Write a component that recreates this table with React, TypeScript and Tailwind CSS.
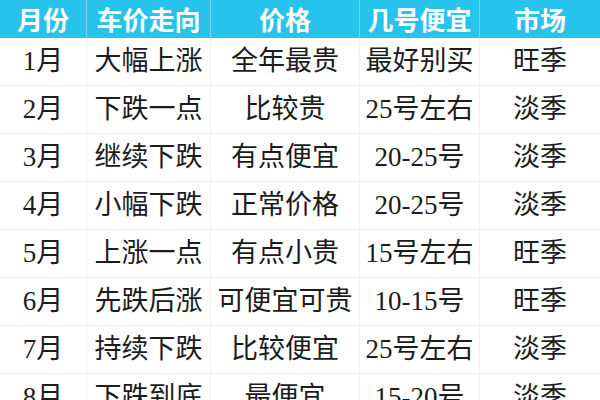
const rows: string[][] = [
  ["1月", "大幅上涨", "全年最贵", "最好别买", "旺季"],
  ["2月", "下跌一点", "比较贵", "25号左右", "淡季"],
  ["3月", "继续下跌", "有点便宜", "20-25号", "淡季"],
  ["4月", "小幅下跌", "正常价格", "20-25号", "淡季"],
  ["5月", "上涨一点", "有点小贵", "15号左右", "旺季"],
  ["6月", "先跌后涨", "可便宜可贵", "10-15号", "旺季"],
  ["7月", "持续下跌", "比较便宜", "25号左右", "淡季"],
  ["8月", "下跌到底", "最便宜", "15-20号", "淡季"],
];

const heads = ["月份", "车价走向", "价格", "几号便宜", "市场"];

const cols = "grid grid-cols-[86px_124px_149px_120px_121px]";

export default function App() {
  return (
    <div className="w-[600px] h-[400px] overflow-hidden bg-white">
      <div className={`${cols} h-[38px] bg-[#27c3ec] text-white font-bold text-[26px] font-['Noto_Sans_CJK_SC',sans-serif]`}>
        {heads.map((h, i) => (
          <div
            key={h}
            className={`flex items-center justify-center leading-none ${i > 0 ? "border-l border-[#6fd6f2]" : ""}`}
          >
            {h}
          </div>
        ))}
      </div>
      {rows.map((r) => (
        <div
          key={r[0]}
          className={`${cols} h-[48px] border-b border-[#efefef] text-[#1c1c1c] text-[27px] font-['Liberation_Serif','Noto_Sans_CJK_SC',serif]`}
        >
          {r.map((c, i) => (
            <div
              key={i}
              className={`flex items-center justify-center leading-none ${i > 0 ? "border-l border-[#f1f1f1]" : ""}`}
            >
              {c}
            </div>
          ))}
        </div>
      ))}
    </div>
  );
}
